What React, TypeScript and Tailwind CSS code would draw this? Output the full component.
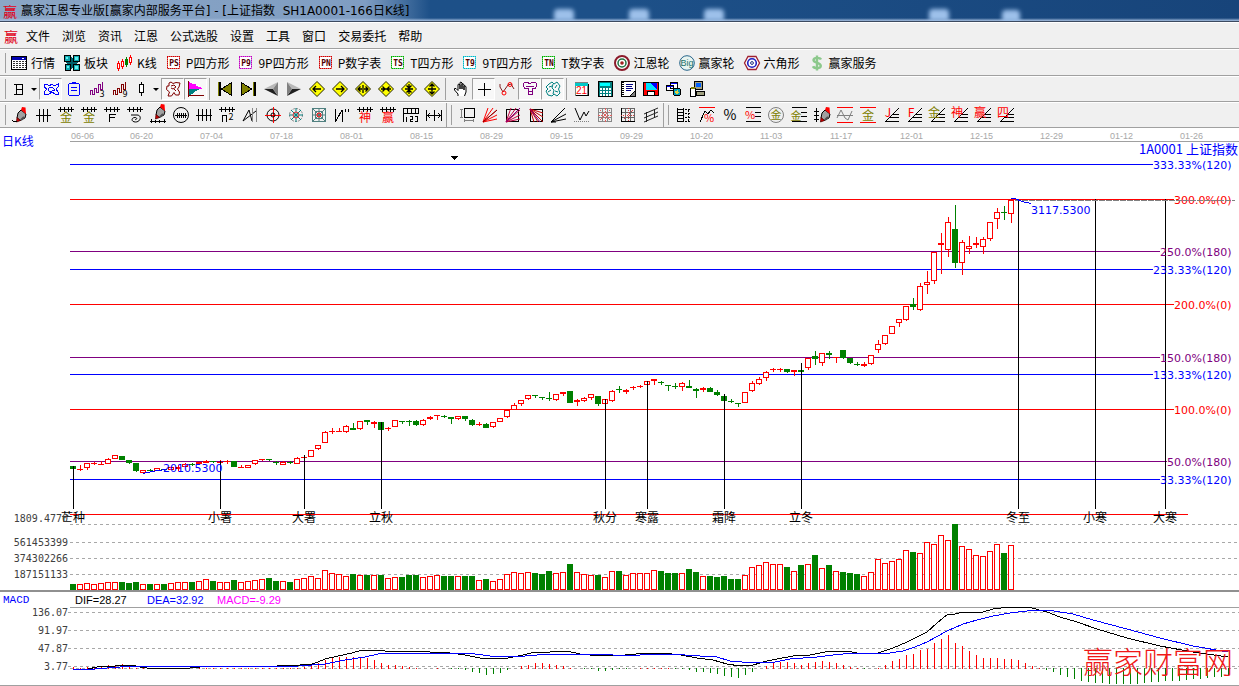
import type { ReactNode } from "react";

const CJK = "font-['Noto_Sans_CJK_SC',sans-serif]";

const menus = ["文件", "浏览", "资讯", "江恩", "公式选股", "设置", "工具", "窗口", "交易委托", "帮助"];

// [high, body top, body bottom, low, volume, rising]
type Bar = [number, number, number, number, number, 0 | 1];

const bars: Bar[] = [
    [466, 466, 469, 469, 6, 0], [465, 469, 470, 471, 6, 1], [463, 463, 468, 470, 7, 1], [462, 463, 464, 465, 6, 1],
    [461, 464, 465, 465, 7, 1], [458, 459, 464, 464, 8, 1], [455, 455, 459, 459, 8, 1], [456, 456, 460, 460, 8, 0],
    [460, 460, 463, 464, 7, 0], [463, 463, 471, 472, 8, 0], [470, 470, 473, 474, 6, 1], [469, 470, 471, 471, 6, 0],
    [468, 468, 471, 471, 6, 1], [469, 469, 470, 471, 6, 0], [467, 467, 470, 470, 7, 1], [465, 467, 469, 471, 8, 1],
    [463, 464, 467, 467, 8, 1], [463, 464, 465, 466, 8, 0], [462, 462, 464, 464, 9, 1], [460, 461, 463, 463, 11, 1],
    [461, 461, 462, 463, 9, 0], [460, 462, 463, 464, 8, 1], [460, 461, 462, 464, 8, 1], [461, 461, 467, 467, 10, 0],
    [465, 467, 468, 468, 8, 1], [465, 465, 468, 468, 9, 1], [460, 460, 464, 465, 10, 1], [459, 459, 460, 461, 11, 1],
    [459, 459, 460, 461, 12, 0], [461, 462, 463, 465, 9, 0], [461, 462, 465, 465, 9, 1], [461, 462, 463, 464, 8, 0],
    [457, 458, 464, 464, 11, 1], [456, 457, 458, 460, 12, 1], [450, 450, 457, 457, 14, 1], [445, 445, 449, 450, 12, 1],
    [431, 432, 443, 443, 20, 1], [428, 431, 432, 434, 17, 1], [428, 431, 432, 432, 16, 1], [425, 426, 432, 433, 14, 1],
    [423, 428, 430, 430, 16, 0], [421, 421, 429, 430, 15, 1], [420, 420, 422, 425, 15, 0], [421, 422, 424, 428, 15, 1],
    [422, 422, 430, 430, 15, 0], [427, 428, 429, 431, 12, 1], [420, 420, 427, 427, 13, 1], [421, 421, 422, 424, 13, 0],
    [420, 421, 422, 426, 15, 0], [420, 421, 425, 426, 15, 0], [419, 420, 425, 426, 13, 1], [416, 417, 419, 420, 14, 1],
    [415, 415, 416, 420, 15, 1], [415, 416, 417, 418, 14, 0], [417, 417, 419, 424, 14, 0], [416, 416, 419, 420, 14, 1],
    [416, 416, 419, 421, 14, 0], [419, 420, 425, 426, 14, 0], [422, 424, 425, 426, 10, 1], [423, 424, 428, 428, 11, 0],
    [422, 422, 427, 428, 9, 1], [418, 418, 422, 422, 11, 1], [410, 410, 417, 418, 16, 1], [403, 405, 410, 410, 18, 1],
    [400, 400, 404, 406, 17, 1], [395, 395, 399, 400, 18, 1], [395, 395, 396, 398, 17, 0], [397, 397, 398, 400, 16, 0],
    [392, 398, 399, 401, 19, 0], [394, 394, 400, 401, 17, 1], [392, 392, 394, 396, 18, 1], [391, 391, 403, 403, 26, 0],
    [399, 400, 402, 406, 18, 1], [397, 398, 401, 402, 16, 1], [394, 394, 398, 400, 15, 1], [396, 396, 404, 406, 15, 0],
    [399, 399, 404, 404, 13, 1], [390, 391, 401, 402, 19, 1], [386, 389, 390, 393, 19, 0], [389, 390, 392, 394, 15, 1],
    [386, 387, 388, 390, 17, 1], [385, 386, 387, 388, 17, 1], [381, 381, 385, 385, 17, 1], [379, 379, 381, 385, 20, 1],
    [381, 382, 383, 385, 19, 0], [385, 385, 386, 391, 17, 0], [383, 386, 387, 389, 17, 0], [382, 383, 387, 391, 17, 1],
    [380, 386, 388, 388, 21, 0], [388, 389, 391, 398, 18, 0], [387, 388, 390, 392, 14, 1], [387, 388, 392, 392, 14, 0],
    [390, 392, 395, 396, 13, 0], [395, 396, 401, 401, 14, 0], [399, 401, 402, 403, 11, 0], [403, 403, 404, 407, 11, 0],
    [392, 392, 403, 403, 15, 1], [381, 383, 391, 392, 23, 1], [377, 379, 384, 385, 25, 1], [371, 372, 378, 381, 28, 1],
    [368, 369, 370, 372, 26, 1], [368, 369, 370, 372, 26, 1], [369, 369, 372, 373, 23, 0], [370, 370, 372, 376, 19, 1],
    [370, 370, 372, 372, 25, 0], [358, 358, 368, 370, 26, 1], [351, 356, 359, 365, 35, 0], [353, 353, 363, 366, 22, 1],
    [351, 353, 355, 359, 25, 0], [357, 357, 358, 363, 19, 1], [350, 350, 358, 359, 18, 0], [358, 358, 363, 364, 17, 0],
    [362, 364, 365, 366, 16, 0], [362, 364, 366, 367, 14, 1], [355, 355, 364, 365, 18, 1], [340, 344, 350, 353, 31, 1],
    [335, 335, 344, 345, 27, 1], [326, 326, 334, 334, 29, 1], [319, 319, 323, 327, 31, 1], [306, 306, 320, 321, 40, 1],
    [298, 304, 307, 310, 38, 0], [283, 286, 310, 311, 37, 1], [271, 282, 285, 294, 48, 1], [252, 252, 281, 284, 46, 1],
    [233, 243, 245, 274, 55, 1], [217, 222, 250, 257, 50, 1], [205, 229, 263, 268, 66, 0], [240, 242, 263, 275, 44, 1],
    [236, 246, 249, 254, 41, 1], [237, 243, 245, 248, 35, 1], [237, 239, 247, 254, 34, 1], [222, 222, 239, 241, 39, 1],
    [208, 212, 219, 229, 46, 1], [206, 212, 213, 220, 37, 0], [199, 200, 214, 223, 45, 1],
];

const histogram = [
    2, 1, 2, 2, 3, 4, 4, 5, 4, 1, 1, -1, -1, -1, -1, -1, 0, 0, 1, 1, 1, 1, 1, 1, 1, 1, 1, 1, 1, 1, 1, 1, 1, 2, 3, 6,
    9, 12, 12, 12, 12, 12, 11, 9, 6, 4, 4, 3, 2, 1, 0, 0, 1, 0, -1, -1, -2, -4, -5, -7, -6, -5, -2, 0, 3, 4, 6, 6, 5,
    4, 3, 1, 0, -1, -1, -3, -3, -2, -1, -1, 0, 1, 1, 1, 1, 1, -1, -1, -2, -4, -4, -5, -6, -8, -9, -10, -7, -4, 0, 3,
    6, 7, 7, 6, 4, 6, 7, 8, 7, 6, 4, 2, 1, -1, 0, 1, 4, 8, 10, 14, 15, 19, 20, 26, 30, 34, 26, 23, 18, 14, 11, 11,
    11, 10, 10, 9, 6, 3, 1, -2, -4, -7, -9, -11, -13, -14, -15, -15, -16, -16, -16, -16, -16, -15, -14, -14, -13,
    -13, -13, -12, -11, -11, -10, -9, -9, -8,
];

const dif =
    "73,669 88,669 97,667 115,666 132,665 140,667 147,668 190,668 200,667 230,666 255,667 300,665 312,664 318,662 325,659 338,656 352,653 362,650 380,650 385,651 413,651 430,652 450,653 465,655 480,658 497,659 508,658 523,655 535,652 550,652 567,651 580,654 590,655 613,656 648,653 663,653 681,655 697,658 713,660 727,664 740,666 753,665 767,661 777,659 793,656 810,655 830,651 847,651 857,653 875,654 893,648 907,642 917,637 927,632 937,623 948,614 955,614 963,612 983,612 993,609 1010,607 1028,607 1047,612 1060,617 1077,622 1097,629 1127,638 1160,646 1193,652 1228,657";
const dea =
    "73,669 95,669 120,667 138,666 160,667 300,666 325,664 345,660 365,657 378,654 400,653 462,653 475,654 490,656 513,657 537,655 557,654 593,654 613,655 640,655 663,654 685,655 700,656 717,657 730,661 753,663 775,662 790,659 817,657 833,655 853,653 883,654 903,651 915,647 927,642 947,631 963,624 977,620 993,616 1010,613 1027,611 1047,610 1073,614 1093,620 1127,629 1160,638 1193,646 1228,652";

const levels = [
    { y: 164, label: "333.33%(120)", x: 1153, color: "#0000ff" },
    { y: 199, label: "300.0%(0)", x: 1174, color: "#ff0000" },
    { y: 251, label: "250.0%(180)", x: 1160, color: "#800080" },
    { y: 269, label: "233.33%(120)", x: 1153, color: "#0000ff" },
    { y: 304, label: "200.0%(0)", x: 1174, color: "#ff0000" },
    { y: 357, label: "150.0%(180)", x: 1160, color: "#800080" },
    { y: 374, label: "133.33%(120)", x: 1153, color: "#0000ff" },
    { y: 409, label: "100.0%(0)", x: 1174, color: "#ff0000" },
    { y: 461, label: "50.0%(180)", x: 1167, color: "#800080" },
    { y: 479, label: "33.33%(120)", x: 1160, color: "#0000ff" },
];

const dates = [
    "06-06", "06-20", "07-04", "07-18", "08-01", "08-15", "08-29", "09-15", "09-29",
    "10-20", "11-03", "11-17", "12-01", "12-15", "12-29", "01-12", "01-26",
];

const terms = [
    { x: 73, top: 466, name: "芒种" },
    { x: 220, top: 461, name: "小署" },
    { x: 304, top: 455, name: "大署" },
    { x: 381, top: 422, name: "立秋" },
    { x: 605, top: 399, name: "秋分" },
    { x: 647, top: 381, name: "寒露" },
    { x: 724, top: 394, name: "霜降" },
    { x: 801, top: 363, name: "立冬" },
    { x: 1018, top: 200, name: "冬至" },
    { x: 1095, top: 199, name: "小寒" },
    { x: 1165, top: 199, name: "大寒" },
];

/* ---------- icons ---------- */

function Icon({ children, smooth }: { children: ReactNode; smooth?: boolean }) {
    return (
        <svg
            className="h-4 w-4 shrink-0 overflow-visible"
            viewBox="0 0 16 16"
            fill="none"
            stroke="#000"
            shapeRendering={smooth ? "auto" : "crispEdges"}
            aria-hidden="true"
        >
            {children}
        </svg>
    );
}

function Glyph({ x = 8, y, size, color, children }: { x?: number; y: number; size: number; color: string; children: string }) {
    return (
        <text
            x={x}
            y={y}
            fontSize={size}
            fill={color}
            stroke="none"
            textAnchor="middle"
            className={CJK}
        >
            {children}
        </text>
    );
}

const Square = ({ color, text }: { color: string; text: string }) => (
    <Icon>
        <rect x="1.5" y="1.5" width="12" height="12" fill="#fff" stroke={color} />
        <path d="M1.5 1.5H13.5V13.5H1.5Z" stroke="#fff" strokeOpacity=".4" strokeDasharray="1 1" />
        <text x="8" y="11" fontSize="8" fill="#500000" stroke="none" textAnchor="middle" className="font-['DejaVu_Sans_Mono',monospace] font-bold">
            {text}
        </text>
    </Icon>
);

const QuoteIcon = (
    <Icon>
        <rect x=".5" y="1.5" width="15" height="13" fill="#fff" />
        <path d="M1 3H15" stroke="#0000b0" strokeWidth="3" />
        <path d="M11 3H13" stroke="#fff" />
        <path d="M2 6.5H15M2 8.5H15M2 10.5H15M2 12.5H15" stroke="#333" strokeDasharray="2 1" />
    </Icon>
);

const BlockIcon = (
    <Icon>
        <path d="M.5 .5H6.5V6.5H.5ZM9.5 .5H15.5V6.5H9.5ZM1.5 9.5H6.5V15.5H1.5ZM9.5 9.5H15.5V15.5H9.5Z" fill="#10a8b0" />
        <path d="M2 2H4V4H2ZM11 2H14V5H11ZM3 11H5V13H3ZM11 11H14V14H11Z" fill="#60f0f0" stroke="none" />
        <path d="M7.5 2V14M2 7.5H14M8.5 3V13M3 8.5H13" stroke="#00606a" />
    </Icon>
);

const CandlesIcon = (
    <Icon>
        <path d="M1.5 6V16M13.5 0V10" stroke="#f00" />
        <path d="M5.5 4V14" stroke="#f00" />
        <path d="M9.5 2V12" stroke="#008000" />
        <path d="M.5 8.5H2.5V13.5H.5ZM4.5 6.5H6.5V11.5H4.5ZM12.5 2.5H14.5V7.5H12.5Z" fill="#fff" stroke="#f00" />
        <path d="M8.5 4.5H10.5V9.5H8.5Z" fill="#008000" stroke="#008000" />
    </Icon>
);

const WheelIcon = (
    <Icon smooth>
        <circle cx="8" cy="8" r="7" stroke="#8b1a2a" strokeWidth="2" fill="#fff" />
        <circle cx="8" cy="8" r="4" stroke="#207040" strokeWidth="1.5" />
        <circle cx="8" cy="8" r="1.8" fill="#a02020" stroke="none" />
    </Icon>
);

const BigIcon = (
    <Icon smooth>
        <circle cx="8" cy="8" r="7.3" stroke="#27658a" fill="#e8f4f0" />
        <text x="8" y="11" fontSize="9" fill="#1a7068" stroke="none" textAnchor="middle" className="font-['Liberation_Sans',sans-serif]">
            Big
        </text>
    </Icon>
);

const HexIcon = (
    <Icon smooth>
        <path d="M4 1.5H12L15.5 8L12 14.5H4L.5 8Z" stroke="#a02030" strokeWidth="1.3" fill="#fff" />
        <circle cx="8" cy="8" r="4.3" stroke="#2020c0" strokeWidth="1.6" />
        <circle cx="8" cy="8" r="1.4" stroke="#203080" />
    </Icon>
);

const DollarIcon = (
    <Icon smooth>
        <path d="M12 4.5C11 2.5 5 2 4.5 5C4.3 8 12 7.5 11.8 11C11.5 14 5 13.8 4 11.3M8 .5V15.5" stroke="#8cc88c" strokeWidth="2.4" />
    </Icon>
);

const toolbarOne = [
    { icon: QuoteIcon, label: "行情" },
    { icon: BlockIcon, label: "板块" },
    { icon: CandlesIcon, label: "K线" },
    { icon: <Square color="#d00000" text="PS" />, label: "P四方形" },
    { icon: <Square color="#c000c0" text="P9" />, label: "9P四方形" },
    { icon: <Square color="#d00000" text="PN" />, label: "P数字表" },
    { icon: <Square color="#00b000" text="TS" />, label: "T四方形" },
    { icon: <Square color="#00b8c8" text="T9" />, label: "9T四方形" },
    { icon: <Square color="#00b000" text="TN" />, label: "T数字表" },
    { icon: WheelIcon, label: "江恩轮" },
    { icon: BigIcon, label: "赢家轮" },
    { icon: HexIcon, label: "六角形" },
    { icon: DollarIcon, label: "赢家服务" },
];

const Wave = ({ color, n }: { color: string; n: string }) => (
    <Icon>
        <path d="M1.5 14V9.5H3.5V13.5H5.5V7.5H7.5V11.5H9.5V3.5H11.5V8.5H13.5V1" stroke={color} />
        <text x="13" y="16" fontSize="8" fill="#000" stroke="none" textAnchor="middle" className="font-['DejaVu_Sans',sans-serif]">
            {n}
        </text>
    </Icon>
);

const Diamond = ({ d }: { d: string }) => (
    <Icon smooth>
        <path d="M8 .5L15.5 8L8 15.5L.5 8Z" fill="#ffff00" stroke="#202000" />
        <path d={d} strokeWidth="1.3" />
    </Icon>
);

const Arrow = () => <span className="h-0 w-0 border-x-[3px] border-t-[3px] border-x-transparent border-t-black" />;

type Tool = { name: string; icon: ReactNode; wide?: boolean; pressed?: boolean; arrow?: boolean; sep?: boolean };

const toolbarTwo: Tool[] = [
    {
        name: "周期",
        arrow: true,
        wide: true,
        icon: (
            <Icon>
                <path d="M5 3V14M11.5 3V14M3 3.5H12M5 8.5H12M3 13.5H12" />
                <path d="M5.5 3V14" />
            </Icon>
        ),
    },
    {
        name: "叠加",
        pressed: true,
        icon: (
            <Icon>
                <path d="M1 3H4L6 5L9 3L11 5L15 3V6L13 8L15 11V13H12L9 11L6 13H1V11L4 8L1 6ZM5 8L7 6L10 7L12 9L9 10L6 10Z" stroke="#0000ff" />
            </Icon>
        ),
    },
    {
        name: "信息",
        icon: (
            <Icon>
                <path d="M3.5 2.5H12.5L13.5 3.5V13.5L12.5 14.5H3.5L2.5 13.5V3.5ZM6 1.5H10M5 6.5H11M5 9.5H11" stroke="#0000ff" />
            </Icon>
        ),
    },
    { name: "三段", icon: <Wave color="#800080" n="3" /> },
    { name: "九段", icon: <Wave color="#800000" n="9" /> },
    {
        name: "K线样式",
        arrow: true,
        wide: true,
        icon: (
            <Icon>
                <path d="M8.5 1V15" />
                <rect x="6.5" y="3.5" width="4" height="8" fill="#fff" />
            </Icon>
        ),
    },
    {
        name: "形态",
        pressed: true,
        icon: (
            <Icon smooth>
                <path d="M4 2L6 1L8 2.5L11 1.5L15 2L14 6L12.5 8L14.5 11L14 14H10.5L9 11.5L6.5 15H3L4.500 11L1.5 8.5L2 5L4 5ZM6 5L9 4L11 6L8 8L6 7M9 8L11 10" stroke="#800000" />
            </Icon>
        ),
    },
    {
        name: "筹码",
        pressed: true,
        icon: (
            <Icon>
                <path d="M1 1L5 3L9 3L7 4L14 7L13 8H1Z" fill="#ff00ff" stroke="none" />
                <path d="M1 8H12L8 10L6 11L4 13L1 14Z" fill="#008080" stroke="none" />
                <path d="M.5 0V16M0 14.5H16" stroke="#800000" />
            </Icon>
        ),
        sep: true,
    },
    {
        name: "首页",
        icon: (
            <Icon>
                <path d="M2 1V15" strokeWidth="3" />
                <path d="M1.5 1V15" stroke="#808000" />
                <path d="M14.5 1.5V14.5L4.5 8Z" fill="#808000" />
            </Icon>
        ),
    },
    {
        name: "末页",
        icon: (
            <Icon>
                <path d="M14 1V15" strokeWidth="3" />
                <path d="M13.5 1V15" stroke="#808000" />
                <path d="M1.5 1.5V14.5L11.5 8Z" fill="#808000" />
            </Icon>
        ),
    },
    {
        name: "左移",
        icon: (
            <Icon smooth>
                <path d="M1 8L15 1L10 8Z" fill="#b8b8b8" stroke="none" />
                <path d="M1 8H10L15 15Z" fill="#202020" stroke="none" />
                <path d="M15 1V15L10 8Z" fill="#808080" stroke="none" />
            </Icon>
        ),
    },
    {
        name: "右移",
        icon: (
            <Icon smooth>
                <path d="M15 8L1 1L6 8Z" fill="#b8b8b8" stroke="none" />
                <path d="M15 8H6L1 15Z" fill="#202020" stroke="none" />
                <path d="M1 1V15L6 8Z" fill="#808080" stroke="none" />
            </Icon>
        ),
    },
    { name: "向左", icon: <Diamond d="M4 8H12M7 5L4 8L7 11" /> },
    { name: "向右", icon: <Diamond d="M4 8H12M9 5L12 8L9 11" /> },
    { name: "横向放大", icon: <Diamond d="M3 8H7M9 8H13M5.5 5.5L3 8L5.5 10.5M10.5 5.5L13 8L10.5 10.5M8 4V12" /> },
    { name: "横向缩小", icon: <Diamond d="M3 8H13M4.500 5.5L7 8L4.5 10.5M11.5 5.5L9 8L11.5 10.5" /> },
    { name: "纵向缩小", icon: <Diamond d="M4 8H12M8 3V13M5.5 4.5L8 7L10.5 4.5M5.5 11.5L8 9L10.5 11.5" /> },
    { name: "纵向放大", icon: <Diamond d="M4 8H12M8 3V13M5.5 5.5L8 3L10.5 5.5M5.5 10.5L8 13L10.5 10.5" />, sep: true },
    {
        name: "拖动",
        icon: (
            <Icon smooth>
                <path d="M5 15V13L1.5 9V7.5H3L5 9.5V3.5L6 3L7 4V8V1.5L8 1L9 2V8V3L10 2.500L11 4V9V5L12 4.5L13 6V11L11.5 15" fill="#fff" />
            </Icon>
        ),
    },
    {
        name: "十字光标",
        pressed: true,
        icon: (
            <Icon>
                <path d="M8.5 2V15M2 8.5H15" />
            </Icon>
        ),
    },
    {
        name: "拐点",
        icon: (
            <Icon smooth>
                <path d="M1 3V6L4 11L9 4L12 3L15 8" stroke="#802020" />
                <circle cx="5" cy="12" r="2" stroke="#f00" />
                <circle cx="11" cy="3.5" r="2" stroke="#f00" />
            </Icon>
        ),
    },
    {
        name: "画板",
        pressed: true,
        icon: (
            <Icon>
                <path d="M2.5 1.5H6L8 3L10 1.5H13.5L15 4L13 7.5H10.5V13.5H6.5V7.5H3L1 4ZM4 5H12M6 10H10" stroke="#800080" />
            </Icon>
        ),
    },
    {
        name: "云图",
        pressed: true,
        icon: (
            <Icon smooth>
                <path d="M4 3L7 1L9 3L12 1L15 5L13.5 8L15 12L12 15L9 13L7 15L3 14L1 10L3 8L1 6ZM8 3L7 7L9 9L8 13M4 6L7 5M10 7L12 4M3 11L6 9M10 10L13 11" stroke="#008080" />
            </Icon>
        ),
        sep: true,
    },
    {
        name: "日历",
        icon: (
            <Icon>
                <rect x="1.5" y="1.5" width="12" height="13" fill="#fff" stroke="#808080" />
                <path d="M1 3H14" stroke="#00c8c8" strokeWidth="3" />
                <path d="M2 14.5H15M14.5 3V15" />
                <text x="7.5" y="13" fontSize="10" fill="#f00" stroke="none" textAnchor="middle" className="font-['Liberation_Sans',sans-serif]">
                    21
                </text>
            </Icon>
        ),
    },
    {
        name: "计算器",
        icon: (
            <Icon>
                <rect x="1.5" y=".5" width="14" height="15" fill="#008080" />
                <rect x="3" y="2" width="10" height="3" fill="#00ffff" stroke="none" />
                <path d="M3 7.5H14M3 10.5H14M3 13.5H14" stroke="#fff" strokeWidth="2" strokeDasharray="2 1" />
            </Icon>
        ),
    },
    {
        name: "记事",
        icon: (
            <Icon>
                <rect x="1.5" y=".5" width="14" height="15" fill="#fff" />
                <path d="M3 1V15" strokeWidth="2" strokeDasharray="1 1" />
                <path d="M6 3.5H13M6 5.5H12M6 7.5H13M6 9.5H11" stroke="#000080" />
                <path d="M10 15L15 10V15Z" fill="#808080" />
            </Icon>
        ),
    },
    {
        name: "保存",
        icon: (
            <Icon>
                <rect x=".5" y="1.5" width="15" height="13" fill="#ff0000" />
                <rect x="3" y="2" width="11" height="7" fill="#00e0ff" stroke="none" />
                <path d="M7 2L14 9V2Z" fill="#0000ff" stroke="none" />
                <path d="M4.5 10.5H11.5V14.5H4.5Z" fill="#fff" />
            </Icon>
        ),
    },
    {
        name: "网络",
        icon: (
            <Icon>
                <path d="M4.5 1.5H11.5V7.5H4.5ZM.5 4.5H7.5V9.5H.5Z" fill="#fff" />
                <path d="M5 2.5H11M1 5.5H7" stroke="#0000ff" />
                <circle cx="11" cy="11" r="4" fill="#00a0c0" />
                <path d="M9 10L12 9L13 12L10 13Z" fill="#e0d040" stroke="none" />
            </Icon>
        ),
    },
    {
        name: "数据下载",
        icon: (
            <Icon>
                <path d="M5.5 .5H13.5V8.5H5.5ZM7 10.5H15.5V14.5H7Z" fill="#a0a080" />
                <rect x="7" y="2" width="5" height="4" fill="#0060ff" stroke="none" />
                <path d="M1.5 7.5H6.5V15.5H1.5Z" fill="#fff" />
                <path d="M2 6.5H6" stroke="#808000" strokeWidth="2" />
            </Icon>
        ),
    },
];

const Comb = () => <path d="M0 2.5H16M2.5 0V5M6.5 0V5M10.5 0V5M13.5 0V5" />;

const Brush = () => (
    <g shapeRendering="auto">
        <path d="M9 3L14 7L13 11L8 13.5L5 11L6 6Z" fill="#a0a0a0" />
        <path d="M10 0L13.5 .5L14 7L9 3Z" fill="#f00" stroke="none" />
        <path d="M12 10L9 13" stroke="#505050" strokeWidth="2" />
        <path d="M5 10.500L8.500 13.500L4.500 15Z" fill="#d00000" stroke="#500000" strokeWidth=".8" />
    </g>
);

const Fan = ({ text, color }: { text: string; color: string }) => (
    <Icon>
        <path d="M2 15L16 1M2 14.5H16M6 10.5H16M9 7.5H16" />
        <Glyph x={5} y={10} size={12} color={color}>{text}</Glyph>
    </Icon>
);

const rays = "M1 15L6 1M1 15L11 1M1 15L15 3M1 15L15 8M1 15L15 12";

const toolbarThree: Tool[] = [
    { name: "画笔", icon: <Icon><Brush /><path d="M0 13L2 15L5 14" /></Icon> },
    { name: "等分线", icon: <Icon><path d="M1 8.5H16M4.5 2V15M8.5 2V15M12.5 2V15" /></Icon> },
    { name: "黄金线", icon: <Icon><Comb /><Glyph y={15} size={12} color="#808000">金</Glyph></Icon> },
    { name: "黄金分割", icon: <Icon><Comb /><Glyph y={15} size={12} color="#808000">金</Glyph></Icon> },
    { name: "斐波那契", icon: <Icon><Comb /><path d="M5.5 15V7.5H12M5 10.5H11" /></Icon> },
    { name: "螺旋", icon: <Icon smooth><Comb /><path d="M4 8H10C15 8 14 15 8.500 15C4 15 4 10.500 8 10.500C10.500 10.500 10 13 8 12.500" /></Icon> },
    { name: "标尺画笔", icon: <Icon><g transform="translate(1 -3)"><Brush /></g><path d="M0 14.5H16M1.5 12V16M5.5 13V16M9.5 13V16M14.5 12V16" /></Icon> },
    { name: "圆周", icon: <Icon smooth><circle cx="8" cy="8" r="7.500" /><path d="M2 8.5H14M4.5 6V11M6.5 6V11M8.5 6V11M10.5 6V11M12.5 6V11" /></Icon> },
    { name: "四等分", icon: <Icon><path d="M0 8.5H16M2.5 2V14M6.5 2V14M10.5 2V14M14.5 2V14" /></Icon> },
    {
        name: "平方",
        icon: (
            <Icon>
                <Comb />
                <path d="M3.5 15V8.5H7.5V15" />
                <Glyph x={12} y={13} size={9} color="#000">2</Glyph>
            </Icon>
        ),
    },
    { name: "三角", icon: <Icon smooth><path d="M1 14L7 3L10 14M1 14L14 4" /><path d="M10.5 1V15M14.5 1V15" stroke="#888" /></Icon> },
    { name: "圆心", icon: <Icon smooth><circle cx="8" cy="8" r="6" /><path d="M0 8.5H16M8.5 0V16" stroke="#f00" /><circle cx="8" cy="8" r="2" /></Icon> },
    { name: "圆网", icon: <Icon smooth><circle cx="8" cy="8" r="6.5" stroke="#888" strokeDasharray="2 1" /><path d="M8 1V15M1 8H15M3 3L13 13M13 3L3 13" stroke="#008080" /><circle cx="8" cy="8" r="3" stroke="#f04040" /></Icon> },
    { name: "方网", icon: <Icon smooth><path d="M1.5 1.5H14.5V14.5H1.5ZM4.5 4.5H11.5V11.5H4.5Z" stroke="#508080" /><path d="M8 1V15M1 8H15M1 1L15 15M15 1L1 15" stroke="#508080" /><circle cx="8" cy="8" r="2" stroke="#f00" /></Icon> },
    { name: "波段", icon: <Icon><path d="M1.5 2V15M2 14L8 3V15M11.5 2V5M14.5 2V5" /></Icon> },
    { name: "神奇", icon: <Icon><Comb /><Glyph y={15} size={12} color="#f00">神</Glyph></Icon> },
    { name: "赢家", icon: <Icon><Comb /><Glyph y={15} size={12} color="#f00">赢</Glyph></Icon> },
    { name: "尺度", icon: <Icon><path d="M.5 15V1.5H15.5V6.5H1M4.5 2V6M8.5 2V6M12.5 2V6M3.5 10V15M7 9.5H9.5V12H7.5V14.5H10M12 9.5H14.5V14.5H12" /></Icon> },
    { name: "区间", icon: <Icon><path d="M.5 3V14M15.5 3V14M8.5 3V14M1 8.5H16M4 6L2 8.5L4 11M12 6L14 8.5L12 11" /></Icon>, sep: true },
    { name: "矩形", icon: <Icon><rect x="5.5" y="1.5" width="10" height="9" /><path d="M2.5 2V11M1 2.5H4M1 10.5H4M5 13.5H15M5.5 12V15M14.5 12V15" stroke="#808080" /></Icon> },
    { name: "射线", icon: <Icon smooth><path d={rays} stroke="#f00" /><path d="M1 15L15 3" stroke="#800000" /></Icon> },
    { name: "江恩角", icon: <Icon smooth><rect x="1.5" y="2.5" width="12" height="12" /><path d={rays} stroke="#c00040" /><path d="M1 15L15 1" stroke="#800080" /></Icon> },
    { name: "反向角", icon: <Icon smooth><rect x="2.5" y="2.5" width="12" height="12" /><path d="M2 2L15 6M2 2L15 10M2 2L15 15M2 2L10 15M2 2L6 15" stroke="#c00000" /><path d="M2 2L12 15" stroke="#800080" /></Icon> },
    { name: "扇形", icon: <Icon smooth><path d="M0 15L14 1M0 15L15 7M0 15L15 12M0 15H5" /></Icon> },
    { name: "折线", icon: <Icon smooth><path d="M1 1L6 13L10 5L12 9L15 4" /><path d="M0 14.5H16" stroke="#808080" strokeDasharray="1 1" /></Icon> },
    { name: "网格", icon: <Icon><path d="M1.5 1.5H14.5V14.5H1.5ZM5.5 1V15M10.5 1V15M1 5.5H15M1 10.5H15" stroke="#888" /><path d="M8 1V15M1 8H15M3 3L13 13M13 3L3 13" stroke="#e06060" strokeDasharray="2 1" /></Icon> },
    { name: "百分网格", icon: <Icon><path d="M1.5 1.5H14.5V14.5H1.5ZM5.5 1V15M10.5 1V15M1 5.5H15M1 10.5H15" stroke="#666" /><path d="M1.5 1V15M1 14.5H15" /><path d="M8 1V15M1 8H15M13 3L3 13" stroke="#d04040" strokeDasharray="1 1" /></Icon> },
    { name: "通道", icon: <Icon smooth><path d="M1 7L15 1M1 11L15 5M1 15L15 9M3.5 5V15M11.5 3V11" stroke="#222" /></Icon>, sep: true },
    { name: "刻度", icon: <Icon><path d="M1.500 1V15M7.5 1V15M2 2.5H7M2 5.5H7M2 8.5H7M2 11.5H7M2 14.5H7" /><path d="M9 2.5H15M9 6.5H14M9 10.5H15M9 14.5H14M12.5 3V15" strokeDasharray="2 1" /></Icon> },
    { name: "百分比波段", icon: <Icon><path d="M0 .5H16" stroke="#f00" /><path d="M1 15L6 4L9 7L12 3L15 6" /><Glyph x={10} y={15} size={11} color="#f00">%</Glyph></Icon> },
    { name: "百分比", icon: <Icon><Glyph y={13} size={14} color="#000">%</Glyph></Icon> },
    { name: "百分比线", icon: <Icon><path d="M1 .5H16M10 5.5H16M10 9.5H16M1 14.5H16" /><Glyph x={5} y={12} size={11} color="#f00">%</Glyph></Icon> },
    { name: "黄金圆", icon: <Icon smooth><circle cx="8" cy="8" r="7.5" stroke="#808080" /><Glyph y={12} size={11} color="#808000">金</Glyph></Icon> },
    { name: "黄金横线", icon: <Icon><path d="M1 .5H16M10 5.5H16M10 9.5H16M1 14.5H16" /><Glyph x={5} y={13} size={11} color="#808000">金</Glyph></Icon> },
    { name: "价格画笔", icon: <Icon><g transform="translate(2 0)"><Brush /></g><path d="M2.5 1V15M0 4.5H5M0 8.5H5M0 12.5H5" /></Icon> },
    { name: "周期波", icon: <Icon smooth><path d="M0 .5H16M0 15.5H16" stroke="#f00" /><path d="M0 11L4 3L8 11L11 13L15 4M0 8.5H16" stroke="#808080" /></Icon> },
    { name: "黄金区", icon: <Icon><path d="M0 .5H16M0 15.5H16" stroke="#f00" /><Glyph y={13} size={12} color="#808000">金</Glyph></Icon> },
    { name: "J线", icon: <Fan text="J" color="#f00" /> },
    { name: "F线", icon: <Fan text="F" color="#f00" /> },
    { name: "金线", icon: <Fan text="金" color="#808000" /> },
    { name: "神线", icon: <Fan text="神" color="#f00" /> },
    { name: "赢线", icon: <Fan text="赢" color="#f00" /> },
    { name: "四线", icon: <Fan text="四" color="#f00" /> },
];

/* ---------- layout pieces ---------- */

const Grip = () => <span className="h-5 w-[3px] shrink-0 border-r border-[#a0a0a0] border-l-white" />;

function ToolButton({ tool }: { tool: Tool }) {
    return (
        <button
            type="button"
            title={tool.name}
            aria-label={tool.name}
            className={`flex h-[22px] shrink-0 items-center justify-center ${tool.wide ? "w-[30px] gap-1" : "w-[23px]"} ${
                tool.pressed ? "border border-[#a0a0a0] border-r-white border-b-white bg-[#f8f8f8]" : ""
            }`}
        >
            {tool.icon}
            {tool.arrow && <Arrow />}
        </button>
    );
}

function WinMark({ className }: { className: string }) {
    return <span className={`text-[#e00018] ${className}`}>赢</span>;
}

function TitleBar() {
    return (
        <header className="relative flex h-[22px] items-center gap-1 overflow-hidden border-b border-[#3c4a60] bg-linear-to-r from-[#1d5088] via-[#1d5088] to-[#17447a] px-[3px] text-[12px]">
            <div className="absolute inset-y-0 left-0 w-[430px] bg-linear-to-r from-[#8ba6c6] via-[#7f9dc2] via-85% to-transparent" />
            <div className="absolute inset-x-0 bottom-0 h-[3px] bg-linear-to-b from-transparent to-[#a8c0e0]" />
            <span className="absolute top-[9px] left-[554px] h-3 w-5 rounded-t bg-[#9dc0ea] blur-[2px]" />
            <span className="absolute top-[9px] left-[629px] h-3 w-5 rounded-t bg-[#9dc0ea] blur-[2px]" />
            <span className="absolute top-[9px] left-[704px] h-3 w-5 rounded-t bg-[#9dc0ea] blur-[2px]" />
            <span className="absolute top-[9px] left-[929px] h-3 w-5 rounded-t bg-[#9dc0ea] blur-[2px]" />
            <span className="absolute top-[10px] left-[1002px] h-3 w-[18px] rounded-t bg-[#9dc0ea] blur-[2px]" />
            <WinMark className="relative text-[14px]" />
            <h1 className="relative font-['DejaVu_Sans','Noto_Sans_CJK_SC',sans-serif] whitespace-pre">
                赢家江恩专业版[赢家内部服务平台] - [上证指数  SH1A0001-166日K线]
            </h1>
        </header>
    );
}

function Dashes({ y, x = 70 }: { y: number; x?: number }) {
    return <path d={`M${x} ${y + 0.5}H1239`} stroke="#a8a8a8" strokeDasharray="3 3" />;
}

function AxisLabel({ y, children }: { y: number; children: string }) {
    return (
        <text x="68" y={y} textAnchor="end" fontSize="10" fill="#404040" className="font-['DejaVu_Sans_Mono',monospace]">
            {children}
        </text>
    );
}

function Candle({ bar, index }: { bar: Bar; index: number }) {
    const [high, top, bottom, low, , up] = bar;
    const x = 70 + index * 7;
    const color = up ? "#ff0000" : "#008000";
    const hollow = up === 1 && bottom - top > 2;
    return (
        <g>
            <rect x={x + 3} y={high} width="1" height={low - high} fill={color} />
            {hollow ? (
                <rect x={x + 0.5} y={top + 0.5} width="5" height={bottom - top - 1} fill="#fff" stroke={color} />
            ) : (
                <rect x={x} y={top} width="6" height={bottom - top} fill={color} />
            )}
        </g>
    );
}

function PriceChart() {
    return (
        <svg className="block h-auto w-full" viewBox="0 128 1239 396" shapeRendering="crispEdges" role="img" aria-label="日K线">
            <text x="2" y="146" fontSize="12" fill="#0000ff" className={CJK}>
                日K线
            </text>
            <path d="M70 141.5H1239" stroke="#a0a0a0" />
            {dates.map((d, i) => (
                <text key={d} x={i === 0 ? 71 : 60 + i * 70} y="139" fontSize="9" fill="#a8a8a8" className="font-['Liberation_Sans',sans-serif]">
                    {d}
                </text>
            ))}

            {levels.map((l) => (
                <path key={l.y} d={`M70 ${l.y + 0.5}H${l.x}`} stroke={l.color} />
            ))}
            <path d="M70 514.5H1188" stroke="#ff0000" />

            {bars.map((bar, i) => (
                <Candle key={i} bar={bar} index={i} />
            ))}

            {/* solar terms */}
            {terms.map((t) => (
                <g key={t.x}>
                    <path d={`M${t.x + 0.5} ${t.top}V509`} stroke="#000" />
                    <text x={t.x} y="522" fontSize="12" textAnchor="middle" className={CJK}>
                        {t.name}
                    </text>
                </g>
            ))}

            {levels.map((l) => (
                <text key={l.y} x={l.x} y={l.y + 5} fontSize="11" fill={l.color} className="font-['DejaVu_Sans',sans-serif]">
                    {l.label}
                </text>
            ))}
            <path d="M1015 200.5H1235" stroke="#808080" strokeDasharray="6 1" />

            {/* high and low markers */}
            <path d="M1011 198.5H1015L1022 201.5L1031 203.5M143 473.5L152 471.5L166 469.5" stroke="#0000ff" fill="none" />
            <g fontSize="11" fill="#0000ff" className="font-['DejaVu_Sans',sans-serif]">
                <text x="1031" y="214">3117.5300</text>
                <text x="163" y="472">2010.5300</text>
            </g>
            <path d="M450 155.5H459L454.5 160Z" />

            <text x="1139" y="154" fontSize="13" fill="#0000ff" xmlSpace="preserve" className={CJK}>
                1A0001 上证指数
            </text>
            <AxisLabel y={522}>1809.4770</AxisLabel>
        </svg>
    );
}

function VolumeChart() {
    return (
        <svg className="block h-auto w-full" viewBox="0 524 1239 68" shapeRendering="crispEdges" role="img" aria-label="成交量">
            {[524, 542, 558, 574].map((y) => (
                <Dashes key={y} y={y} />
            ))}
            <AxisLabel y={546}>561453399</AxisLabel>
            <AxisLabel y={562}>374302266</AxisLabel>
            <AxisLabel y={578}>187151133</AxisLabel>
            {bars.map(([, , , , vol, up], i) =>
                up ? (
                    <rect key={i} x={70.5 + i * 7} y={590.5 - vol} width="5" height={vol - 1} fill="#fff" stroke="#ff0000" />
                ) : (
                    <rect key={i} x={70 + i * 7} y={590 - vol} width="6" height={vol} fill="#008000" />
                ),
            )}
            <path d="M0 591H1239" stroke="#909090" strokeWidth="2" />
        </svg>
    );
}

function MacdChart() {
    return (
        <svg className="block h-auto w-full" viewBox="0 607 1239 79" shapeRendering="crispEdges" role="img" aria-label="MACD">
            <path d="M70 607.5H1239M0 685.5H1239" stroke="#a0a0a0" />
            {[612, 630, 648, 666].map((y) => (
                <Dashes key={y} x={68} y={y} />
            ))}
            <Dashes y={668} />
            <AxisLabel y={616}>136.07</AxisLabel>
            <AxisLabel y={634}>91.97</AxisLabel>
            <AxisLabel y={652}>47.87</AxisLabel>
            <AxisLabel y={670}>3.77</AxisLabel>
            {histogram.map((v, i) => (
                <rect
                    key={i}
                    x={73 + i * 7}
                    y={v > 0 ? 669 - v : 668}
                    width="1"
                    height={Math.abs(v)}
                    fill={v > 0 ? "#ff0000" : "#008000"}
                />
            ))}
            <polyline points={dif} fill="none" stroke="#000" />
            <polyline points={dea} fill="none" stroke="#0000ff" />
            <text x="1083" y="673" fontSize="30" fill="#f01818" className={`font-light ${CJK}`}>
                赢家财富网
            </text>
        </svg>
    );
}

export default function App() {
    return (
        <div className={`w-full overflow-hidden bg-white text-[12px] leading-4 text-black ${CJK}`}>
            <TitleBar />

            <nav className="flex h-[27px] items-center gap-3 border-t border-b border-t-white border-b-[#a0a0a0] bg-[#f0f0f0] px-1">
                <WinMark className="-mr-1 text-[14px]" />
                {menus.map((m) => (
                    <button key={m} type="button">
                        {m}
                    </button>
                ))}
            </nav>

            <div className="flex h-[27px] items-center gap-[7px] border-t border-b border-t-white border-b-[#a0a0a0] bg-[#f0f0f0] pl-[3px]">
                <div className="-mr-[4px] flex">
                    <Grip />
                </div>
                {toolbarOne.map((t) => (
                    <button key={t.label} type="button" className="flex shrink-0 items-center gap-0.5 whitespace-nowrap">
                        <span className="flex w-5 justify-center">{t.icon}</span>
                        {t.label}
                    </button>
                ))}
            </div>

            <div className="flex h-[26px] items-center border-t border-b border-t-white border-b-[#a0a0a0] bg-[#f0f0f0] pl-[3px]">
                <Grip />
                <span className="w-[3px] shrink-0" />
                {toolbarTwo.map((t) => (
                    <div key={t.name} className="flex items-center">
                        <ToolButton tool={t} />
                        {t.sep && <span className="mr-[3px] ml-0.5 h-[22px] w-px bg-[#a0a0a0]" />}
                    </div>
                ))}
            </div>

            <div className="flex h-[26px] items-center border-t border-b border-t-white border-b-[#a0a0a0] bg-[#f0f0f0] pl-[3px]">
                <Grip />
                <span className="w-0.5 shrink-0" />
                {toolbarThree.map((t) => (
                    <div key={t.name} className="flex items-center">
                        <ToolButton tool={t} />
                        {t.sep && (
                            <span className="flex items-center pr-[3px] pl-px">
                                <span className="h-[25px] w-px bg-[#a0a0a0]" />
                                <span className="w-0.5" />
                                <Grip />
                            </span>
                        )}
                    </div>
                ))}
            </div>

            <main>
                <PriceChart />
                <VolumeChart />
                <div className="flex h-[15px] items-center pl-[3px] font-['Liberation_Sans',sans-serif] text-[11px]">
                    <h2 className="w-[72px] font-['Liberation_Mono',monospace] font-medium text-[#0000ff]">MACD</h2>
                    <span className="w-[72px]">DIF=28.27</span>
                    <span className="w-[70px] text-[#0000ff]">DEA=32.92</span>
                    <span className="text-[#ff00ff]">MACD=-9.29</span>
                </div>
                <MacdChart />
            </main>
        </div>
    );
}
